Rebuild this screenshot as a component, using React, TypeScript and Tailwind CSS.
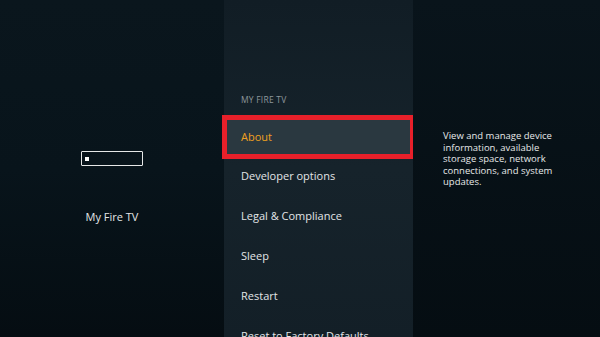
export default function App() {
    const items = ['Developer options', 'Legal & Compliance', 'Sleep', 'Restart', 'Reset to Factory Defaults'];

    return (
        <div
            className="flex w-[600px] h-[337px] overflow-hidden bg-[#07121a] text-white"
            style={{ fontFamily: '"Open Sans", "Liberation Sans", sans-serif' }}
        >
            {/* LEFT */}
            <div className="w-[224px] h-full flex flex-col items-center bg-gradient-to-b from-[#0a161d] via-[#08141b] to-[#050d12]">
                <div className="mt-[151px] w-[62px] h-[15px] border border-white/90 rounded-[1px] flex items-center pl-[3px]">
                    <div className="w-[4px] h-[4px] bg-white"></div>
                </div>
                <span className="mt-[45px] text-[11px] text-[#e4e6e7] leading-none">My Fire TV</span>
            </div>

            {/* MIDDLE */}
            <div className="w-[189px] h-full bg-gradient-to-b from-[#111d25] via-[#16232b] to-[#131f27]">
                <div className="pt-[96px] pl-[17px] text-[8.5px] tracking-wide text-[#8e979c] leading-none">MY FIRE TV</div>
                <div className="mt-[10px] ml-[-2px] w-[193px] h-[44px] border-[5px] border-[#e8202a] bg-[#2a3840] flex items-center pl-[14px]">
                    <span className="text-[11px] text-[#f0a020] leading-none">About</span>
                </div>
                <div className="flex flex-col pl-[17px]">
                    {items.map((item) => (
                        <div key={item} className="h-[40px] shrink-0 flex items-center text-[11px] text-[#e2e5e7] leading-none translate-y-[-3px]">
                            {item}
                        </div>
                    ))}
                </div>
            </div>

            {/* RIGHT */}
            <div className="flex-1 h-full bg-gradient-to-b from-[#09141b] to-[#050d12]">
                <p className="mt-[130px] ml-[30px] w-[120px] text-[9.5px] leading-[11.5px] text-[#e6e8e9]">
                    View and manage device information, available storage space, network connections, and system updates.
                </p>
            </div>
        </div>
    );
}
